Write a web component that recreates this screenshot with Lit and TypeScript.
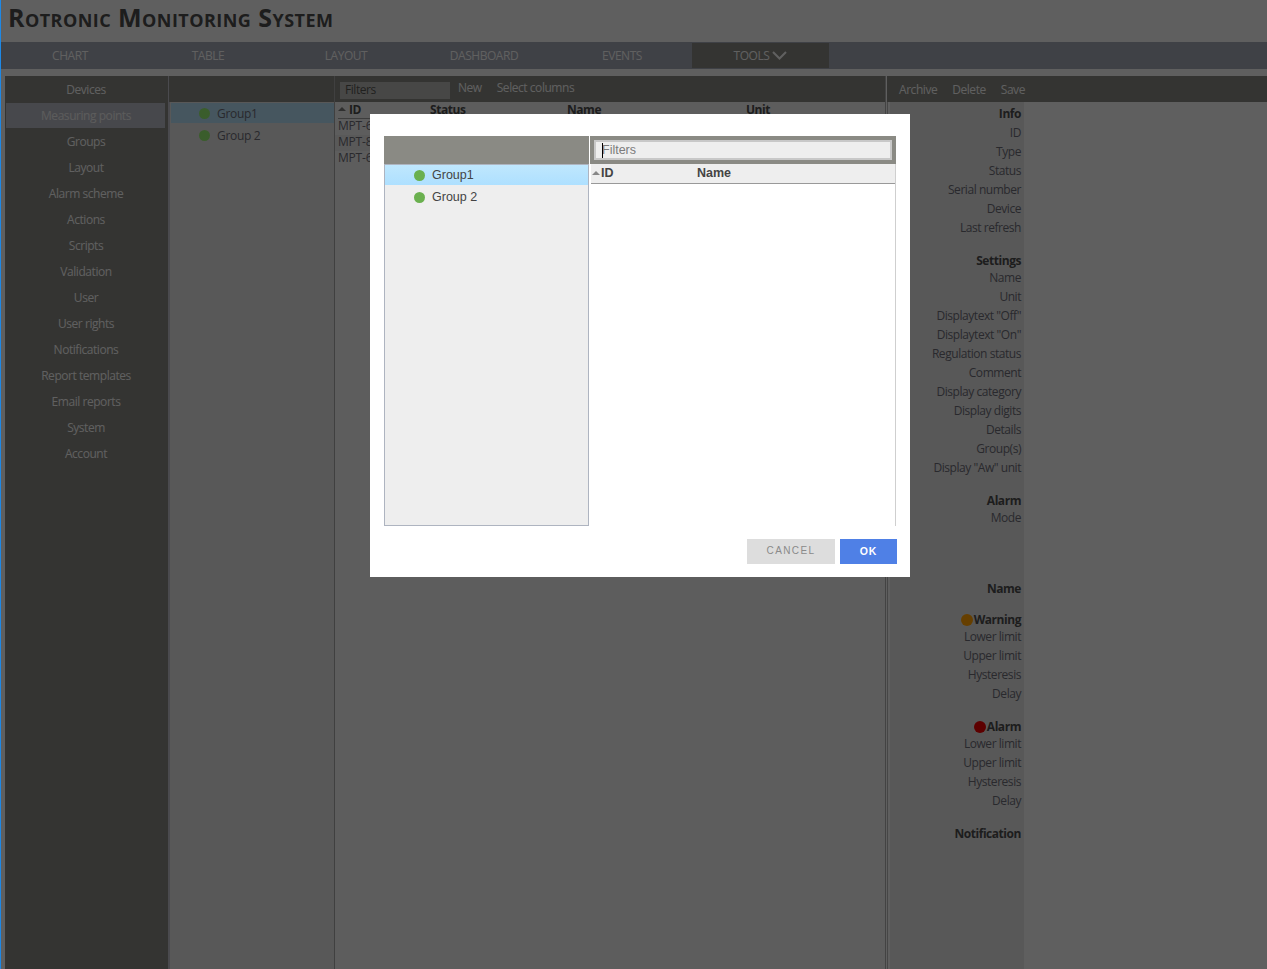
import { LitElement, html, css } from "lit";
import { customElement } from "lit/decorators.js";

const TABS = ["CHART", "TABLE", "LAYOUT", "DASHBOARD", "EVENTS"];
const MENU = ["Devices", "Measuring points", "Groups", "Layout", "Alarm scheme", "Actions", "Scripts", "Validation", "User", "User rights", "Notifications", "Report templates", "Email reports", "System", "Account"];
const GROUPS = ["Group1", "Group 2"];
const ROWS = ["MPT-62B01", "MPT-81C04", "MPT-60A12"];

type Sec = { head: string; dot?: string; rows: string[]; cls?: string };
const SECTIONS: Sec[] = [
  { head: "Info", cls: "first", rows: ["ID", "Type", "Status", "Serial number", "Device", "Last refresh"] },
  { head: "Settings", rows: ["Name", "Unit", 'Displaytext "Off"', 'Displaytext "On"', "Regulation status", "Comment", "Display category", "Display digits", "Details", "Group(s)", 'Display "Aw" unit'] },
  { head: "Alarm", rows: ["Mode"] },
  { head: "Name", cls: "far", rows: [] },
  { head: "Warning", dot: "warn", rows: ["Lower limit", "Upper limit", "Hysteresis", "Delay"] },
  { head: "Alarm", dot: "alarm", rows: ["Lower limit", "Upper limit", "Hysteresis", "Delay"] },
  { head: "Notification", rows: [] },
];

@customElement("app-root")
export class AppRoot extends LitElement {
  static styles = css`
    :host { display: block; height: 100vh; overflow: hidden; font-family: "Open Sans", "Liberation Sans", sans-serif; font-size: 12px; letter-spacing: -0.45px; color: #686872; }
    * { box-sizing: border-box; }
    .page { height: 100vh; display: flex; flex-direction: column; background: #eeeeee; padding-left: 1px; }
    .strip { position: fixed; left: 0; top: 0; bottom: 0; width: 1px; background: #1e88e5; z-index: 3; }
    .title { height: 42px; flex: none; padding-left: 7px; display: flex; align-items: center; font-size: 25px; font-weight: 700; font-variant: small-caps; letter-spacing: 0.45px; color: #4a4a4a; padding-bottom: 9px; }
    .nav { height: 27px; flex: none; display: flex; background: #9da2af; color: #f0f0f0; }
    .tab { width: 138px; display: flex; align-items: center; justify-content: center; gap: 3px; }
    .tab.on { width: 137px; background: #82827d; margin: 1px 0 1px 1px; }
    .main { flex: 1; display: grid; grid-template-columns: 163px 167px 551px 1fr; margin-top: 7px; padding-left: 4px; min-height: 0; }
    .col { display: flex; flex-direction: column; min-width: 0; }
    .bar { height: 26px; flex: none; background: #82827d; display: flex; align-items: center; color: #f0f0f0; }
    .menu { background: #82827d; color: #f0f0f0; padding: 1px 3px 1px 1px; }
    .menu div { height: 26px; display: flex; align-items: center; justify-content: center; padding: 0 0 1px 1px; }
    .menu .on { height: 25px; margin-bottom: 1px; background: #b2b4be; color: #e6e6e6; }
    .groups { background: #dcdcdc; border-left: 2px solid #b8b8c4; border-right: 1px solid #a0a0a0; }
    .groups .bar { margin: 0 0 1px -1px; }
    .g { height: 20px; display: flex; align-items: center; padding-left: 28px; margin: 0 0 2px 1px; color: #686872; letter-spacing: -0.3px; }
    .g.on { background: #aed7ee; }
    .dot { width: 11px; height: 11px; border-radius: 50%; background: #6ab04f; flex: none; margin-right: 7px; }
    .g .dot { background: #92e86f; }
    .tbl { background: #e8e8e8; border-right: 1px solid #a8a8a8; }
    .tbl .bar { padding-left: 5px; }
    .filter { width: 110px; height: 17px; margin-right: 8px; background: #ffffff; opacity: .38; display: flex; align-items: center; padding: 0 0 1px 5px; color: #000; margin-top: 2px; }
    .tbl .bar span { margin-right: 15px; margin-bottom: 4px; }
    .thead { height: 17px; display: flex; margin-left: 3px; border-bottom: 1px solid #9a9a9a; font-weight: 700; color: #4a4a4a; position: relative; }
    .thead span { position: absolute; top: -1px; }
    .thead .arrow { top: 0; }
    .arrow { width: 0; height: 0; border: 4px solid transparent; border-bottom: 4px solid #777; border-top: 0; margin-top: 5px; }
    .tr { height: 16px; padding: 0 0 4px 3px; display: flex; align-items: center; color: #686872; letter-spacing: -0.2px; white-space: nowrap; }
    .tr.alt { background: #dedede; }
    .right { background: #eeeeee; border-left: 1px solid #b0b0b0; margin-left: 1px; }
    .right .bar { gap: 15px; margin-left: -1px; padding: 0 0 0 12px; }
    .props { width: 134px; margin-left: 2px; flex: 1; background: #dcdcdc; padding: 4px 3px 0 0; text-align: right; }
    .sec { margin-top: 16px; }
    .sec.first { margin-top: 0; }
    .sec.first .head { margin-bottom: 2px; }
    .sec.far { margin-top: 54px; }
    .head { height: 15px; line-height: 15px; font-weight: 700; color: #4a4a4a; display: flex; justify-content: flex-end; align-items: center; white-space: nowrap; }
    .sd { width: 12px; height: 12px; border-radius: 50%; margin-right: 1px; }
    .warn { background: #ff9d00; }
    .alarm { background: #e80000; }
    .row { height: 19px; line-height: 19px; white-space: nowrap; }
    .scrim { position: fixed; left: 1px; top: 0; right: 0; bottom: 0; background: rgba(0, 0, 0, .6); z-index: 1; }
    .dialog { position: fixed; left: 370px; top: 114px; width: 540px; height: 463px; background: #ffffff; z-index: 2; padding: 22px 13px 13px 14px; display: flex; flex-direction: column; font-family: "Liberation Sans", Arial, sans-serif; font-size: 12.5px; letter-spacing: 0; color: #444; }
    .panes { flex: 1; display: grid; grid-template-columns: 205px 306px; gap: 1px; min-height: 0; }
    .pane { display: flex; flex-direction: column; min-height: 0; }
    .dh { height: 28px; flex: none; background: #8a8a84; }
    .dh.f { padding: 4px; }
    .input { position: relative; height: 20px; border: 2px solid #c8c8c8; background: #eeeeee; color: #7c7c7c; padding-left: 6px; line-height: 16px; }
    .caret { position: absolute; left: 6px; top: 1px; width: 1px; height: 15px; background: #000; }
    .list { flex: 1; background: #eeeeee; border: 1px solid #aeb4c0; }
    .dg { height: 20px; display: flex; align-items: center; padding: 0 0 1px 29px; margin-bottom: 2px; color: #444; }
    .dg.on { background: linear-gradient(#bfe7fd, #aee0ff); }
    .dg .dot { margin: 1px 7px 0 0; }
    .dtable { flex: 1; border-right: 1px solid #cfcfcf; padding-left: 1px; }
    .dthead { height: 20px; background: #eeeeee; border-bottom: 1px solid #999; display: flex; align-items: center; font-weight: 700; position: relative; color: #444; padding-bottom: 1px; }
    .dthead .arrow { margin: 0 1px; border-bottom-color: #888; }
    .dthead .n { position: absolute; left: 106px; }
    .actions { height: 38px; flex: none; display: flex; justify-content: flex-end; align-items: flex-end; gap: 5px; }
    .btn { height: 25px; font: 700 10.5px "Liberation Sans", Arial, sans-serif; letter-spacing: 1.4px; display: flex; align-items: center; justify-content: center; padding-bottom: 2px; }
    .cancel { width: 88px; background: #dddddd; color: #8a8a8a; font-weight: 400; font-size: 10px; }
    .ok { width: 57px; background: #4f80e6; color: #ffffff; letter-spacing: 0.9px; }
  `;

  render() {
    return html`
      <div class="strip"></div>
      <div class="page">
        <div class="title">Rotronic Monitoring System</div>
        <div class="nav">
          ${TABS.map((t) => html`<div class="tab">${t}</div>`)}
          <div class="tab on">TOOLS
            <svg width="15" height="9" viewBox="0 0 15 9" fill="none" stroke="#f0f0f0" stroke-width="2"><path d="M1 1l6.5 6.5L14 1"/></svg>
          </div>
        </div>
        <div class="main">
          <div class="col menu">
            ${MENU.map((m) => html`<div class="${m === "Measuring points" ? "on" : ""}">${m}</div>`)}
          </div>
          <div class="col groups">
            <div class="bar"></div>
            ${GROUPS.map((g, i) => html`<div class="g ${i === 0 ? "on" : ""}"><i class="dot"></i>${g}</div>`)}
          </div>
          <div class="col tbl">
            <div class="bar"><div class="filter">Filters</div><span>New</span><span>Select columns</span></div>
            <div class="thead">
              <span class="arrow"></span><span style="left:11px">ID</span><span style="left:92px">Status</span><span style="left:229px">Name</span><span style="left:408px">Unit</span>
            </div>
            ${ROWS.map((r, i) => html`<div class="tr ${i === 1 ? "alt" : ""}">${r}</div>`)}
          </div>
          <div class="col right">
            <div class="bar"><span>Archive</span><span>Delete</span><span>Save</span></div>
            <div class="props">
              ${SECTIONS.map((s) => html`
                <div class="sec ${s.cls ?? ""}">
                  <div class="head">${s.dot ? html`<i class="sd ${s.dot}"></i>` : ""}${s.head}</div>
                  ${s.rows.map((r) => html`<div class="row">${r}</div>`)}
                </div>`)}
            </div>
          </div>
        </div>
      </div>
      <div class="scrim"></div>
      <div class="dialog">
        <div class="panes">
          <div class="pane">
            <div class="dh"></div>
            <div class="list">
              ${GROUPS.map((g, i) => html`<div class="dg ${i === 0 ? "on" : ""}"><i class="dot"></i>${g}</div>`)}
            </div>
          </div>
          <div class="pane">
            <div class="dh f"><div class="input">Filters<i class="caret"></i></div></div>
            <div class="dtable">
              <div class="dthead"><span class="arrow"></span>ID<span class="n">Name</span></div>
            </div>
          </div>
        </div>
        <div class="actions">
          <div class="btn cancel">CANCEL</div>
          <div class="btn ok">OK</div>
        </div>
      </div>
    `;
  }
}
